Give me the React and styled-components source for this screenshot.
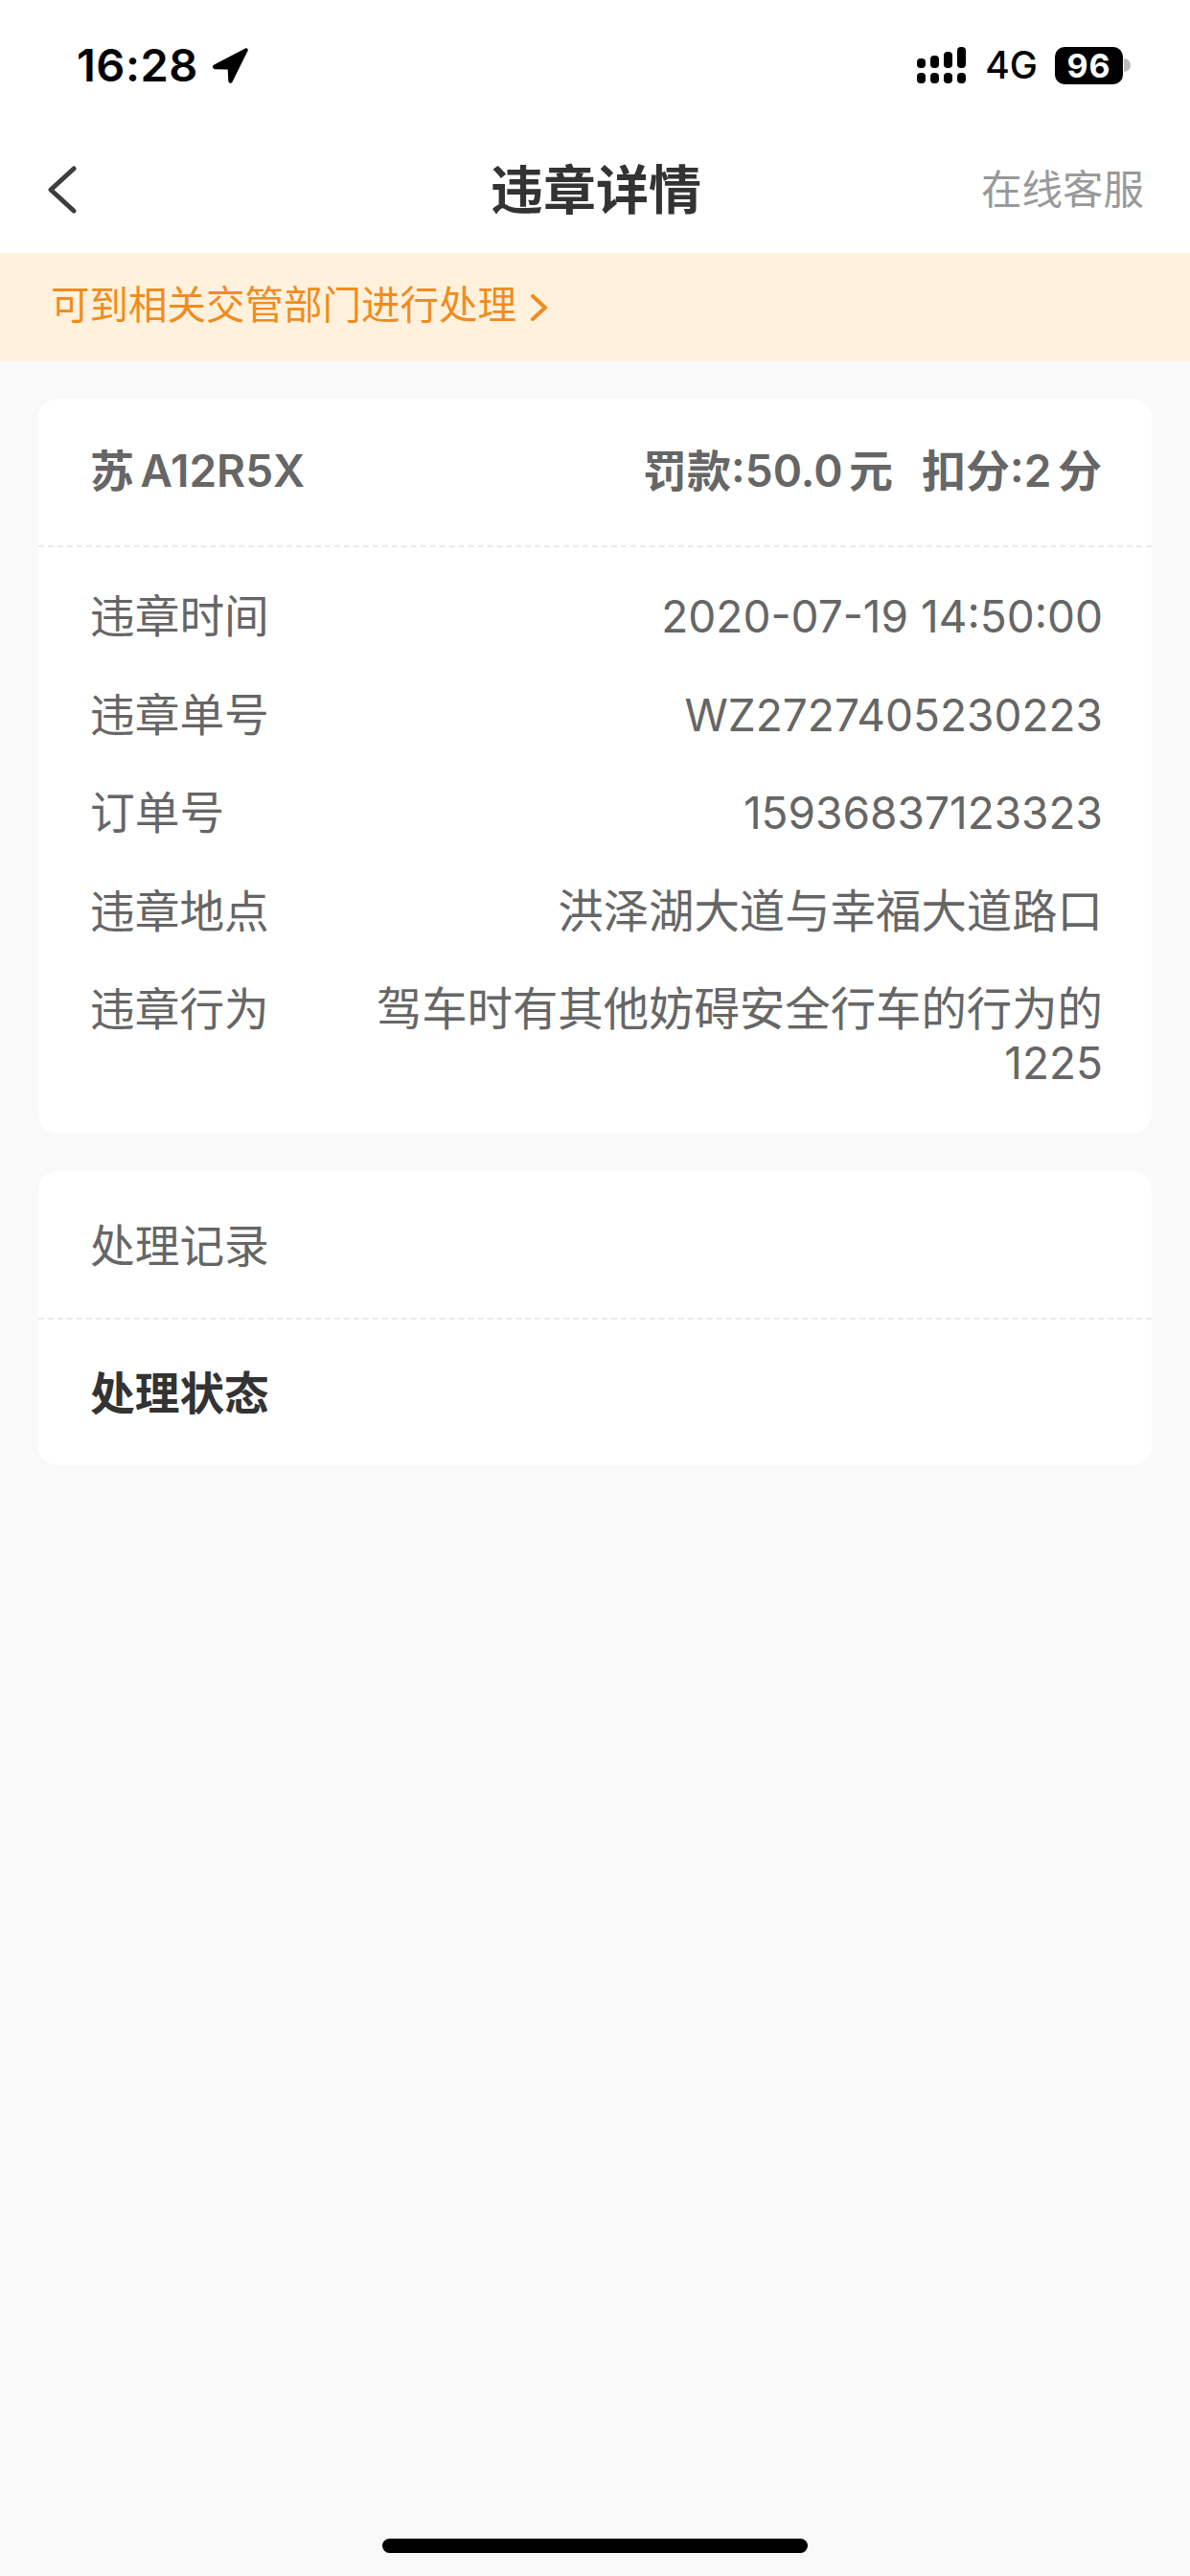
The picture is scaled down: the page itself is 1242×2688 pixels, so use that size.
import React from 'react';
import styled, { createGlobalStyle } from 'styled-components';

const GlobalStyle = createGlobalStyle`
  html, body {
    margin: 0;
    padding: 0;
    background: #f9f9f9;
  }
  * {
    box-sizing: border-box;
  }
`;

const fontStack = `Inter, "Noto Sans CJK SC", sans-serif`;

const Page = styled.div`
  position: relative;
  width: 1242px;
  height: 2688px;
  overflow: hidden;
  background: #f9f9f9;
  font-family: ${fontStack};
`;

const TopArea = styled.div`
  background: #fff;
`;

const StatusBar = styled.div`
  height: 132px;
  padding: 0 62px 0 80px;
  display: flex;
  justify-content: space-between;
  align-items: flex-start;
`;

const StatusLeft = styled.div`
  display: flex;
  align-items: center;
  gap: 14px;
  height: 36px;
  margin-top: 50px;
`;

const Time = styled.span`
  font-size: 47px;
  font-weight: 600;
  color: #000;
  line-height: 36px;
  letter-spacing: 0.5px;
`;

const StatusRight = styled.div`
  display: flex;
  align-items: center;
  height: 40px;
  margin-top: 48px;
`;

const Network = styled.span`
  font-size: 39px;
  font-weight: 500;
  color: #000;
  line-height: 40px;
  margin: 0 18px 0 20px;
`;

const Battery = styled.div`
  width: 71px;
  height: 39px;
  border-radius: 10px;
  background: #000;
  color: #fff;
  font-size: 34px;
  font-weight: 700;
  line-height: 39px;
  letter-spacing: 1px;
  text-align: center;
`;

const BatteryNub = styled.div`
  width: 7px;
  height: 14px;
  margin-left: 1px;
  border-radius: 0 7px 7px 0;
  background: #bdbdbd;
`;

const NavBar = styled.div`
  height: 132px;
  padding: 0 48px 0 50px;
  display: grid;
  grid-template-columns: 1fr auto 1fr;
  align-items: center;
`;

const BackButton = styled.div`
  display: flex;
  align-items: center;
`;

const Title = styled.div`
  font-size: 55px;
  font-weight: 700;
  color: #333;
  line-height: 64px;
`;

const NavAction = styled.div`
  font-size: 42.5px;
  color: #999;
  line-height: 50px;
  text-align: right;
`;

const Notice = styled.div`
  height: 113px;
  padding-left: 53px;
  display: flex;
  align-items: center;
  gap: 14px;
  background: #fff1dc;
  color: #f08c1e;
  font-size: 40.5px;
`;

const NoticeText = styled.span`
  line-height: 48px;
  margin-top: -3px;
`;

const Content = styled.div`
  padding: 39px 40px 0;
  display: flex;
  flex-direction: column;
  gap: 39px;
`;

const Card = styled.div`
  background: #fff;
  border-radius: 20px;
`;

const CardHeader = styled.div`
  height: 153px;
  padding: 0 52px 4px 54px;
  display: flex;
  justify-content: space-between;
  align-items: center;
  color: #666;
  font-size: 46px;
  font-weight: 600;
  line-height: 56px;
  word-spacing: -5px;
`;

const Fees = styled.div`
  display: flex;
  gap: 30px;
`;

const Divider = styled.div`
  border-top: 2px dashed #eaeaea;
`;

const DetailList = styled.div`
  padding: 21px 51px 22.5px 54px;
  display: flex;
  flex-direction: column;
`;

const DetailRow = styled.div`
  display: flex;
  justify-content: space-between;
  gap: 60px;
  padding: 23.25px 0;
  font-size: 47.4px;
  line-height: 56px;
  color: #666;
`;

const DetailLabel = styled.div`
  flex: none;
  font-size: 46.7px;
`;

const DetailValue = styled.div`
  text-align: right;
`;

const LatinText = styled.span`
  font-size: 46px;
`;

const RecordRow = styled.div`
  height: ${(p) => p.$height}px;
  padding: 0 54px 5px;
  display: flex;
  align-items: center;
  font-size: 46.7px;
  font-weight: ${(p) => (p.$strong ? 700 : 400)};
  color: ${(p) => (p.$strong ? '#333' : '#666')};
`;

const HomeIndicator = styled.div`
  position: absolute;
  left: 399px;
  bottom: 24px;
  width: 444px;
  height: 15px;
  border-radius: 8px;
  background: #000;
`;

const details = [
  { label: '违章时间', latin: '2020-07-19 14:50:00' },
  { label: '违章单号', latin: 'WZ2727405230223' },
  { label: '订单号', latin: '15936837123323' },
  { label: '违章地点', text: '洪泽湖大道与幸福大道路口' },
  { label: '违章行为', text: '驾车时有其他妨碍安全行车的行为的', latin: '1225' },
];

const LocationArrow = () => (
  <svg width="38" height="38" viewBox="0 0 38 38">
    <path
      d="M35 1.5 2.5 18.5c-2.5 1.4-1.6 4.6 1.2 4.7l13 .3.6 12c.2 2.6 3.3 3 4.3.7L37.6 4c.7-1.8-1-3.4-2.6-2.5Z"
      fill="#000"
    />
  </svg>
);

const SignalBars = () => (
  <svg width="51" height="38" viewBox="0 0 51 38" fill="#000">
    <rect x="0" y="12" width="9" height="10" rx="4" />
    <rect x="14" y="9" width="9" height="13" rx="4" />
    <rect x="28" y="5" width="9" height="17" rx="4" />
    <rect x="42" y="0" width="9" height="22" rx="4" />
    <rect x="0" y="27" width="9" height="11" rx="4" />
    <rect x="14" y="27" width="9" height="11" rx="4" />
    <rect x="28" y="27" width="9" height="11" rx="4" />
    <rect x="42" y="27" width="9" height="11" rx="4" />
  </svg>
);

const BackIcon = () => (
  <svg width="30" height="50" viewBox="0 0 30 50" fill="none">
    <path d="M27 3 3 25l24 22" stroke="#3d3d3d" strokeWidth="5" strokeLinecap="round" strokeLinejoin="round" />
  </svg>
);

const NoticeChevron = () => (
  <svg width="20" height="28" viewBox="0 0 20 28" fill="none">
    <path d="M3 2 16 14 3 26" stroke="#f08c1e" strokeWidth="4" strokeLinecap="round" strokeLinejoin="round" />
  </svg>
);

const App = () => {
  return (
    <Page>
      <GlobalStyle />
      <TopArea>
        <StatusBar>
          <StatusLeft>
            <Time>16:28</Time>
            <LocationArrow />
          </StatusLeft>
          <StatusRight>
            <SignalBars />
            <Network>4G</Network>
            <Battery>96</Battery>
            <BatteryNub />
          </StatusRight>
        </StatusBar>
        <NavBar>
          <BackButton>
            <BackIcon />
          </BackButton>
          <Title>违章详情</Title>
          <NavAction>在线客服</NavAction>
        </NavBar>
      </TopArea>
      <Notice>
        <NoticeText>可到相关交管部门进行处理</NoticeText>
        <NoticeChevron />
      </Notice>
      <Content>
        <Card>
          <CardHeader>
            <div>苏 A12R5X</div>
            <Fees>
              <span>罚款:50.0 元</span>
              <span>扣分:2 分</span>
            </Fees>
          </CardHeader>
          <Divider />
          <DetailList>
            {details.map((row) => (
              <DetailRow key={row.label}>
                <DetailLabel>{row.label}</DetailLabel>
                <DetailValue>
                  {row.text}
                  {row.latin && <LatinText>{row.latin}</LatinText>}
                </DetailValue>
              </DetailRow>
            ))}
          </DetailList>
        </Card>
        <Card>
          <RecordRow $height={153}>处理记录</RecordRow>
          <Divider />
          <RecordRow $height={152} $strong>处理状态</RecordRow>
        </Card>
      </Content>
      <HomeIndicator />
    </Page>
  );
};

export default App;
